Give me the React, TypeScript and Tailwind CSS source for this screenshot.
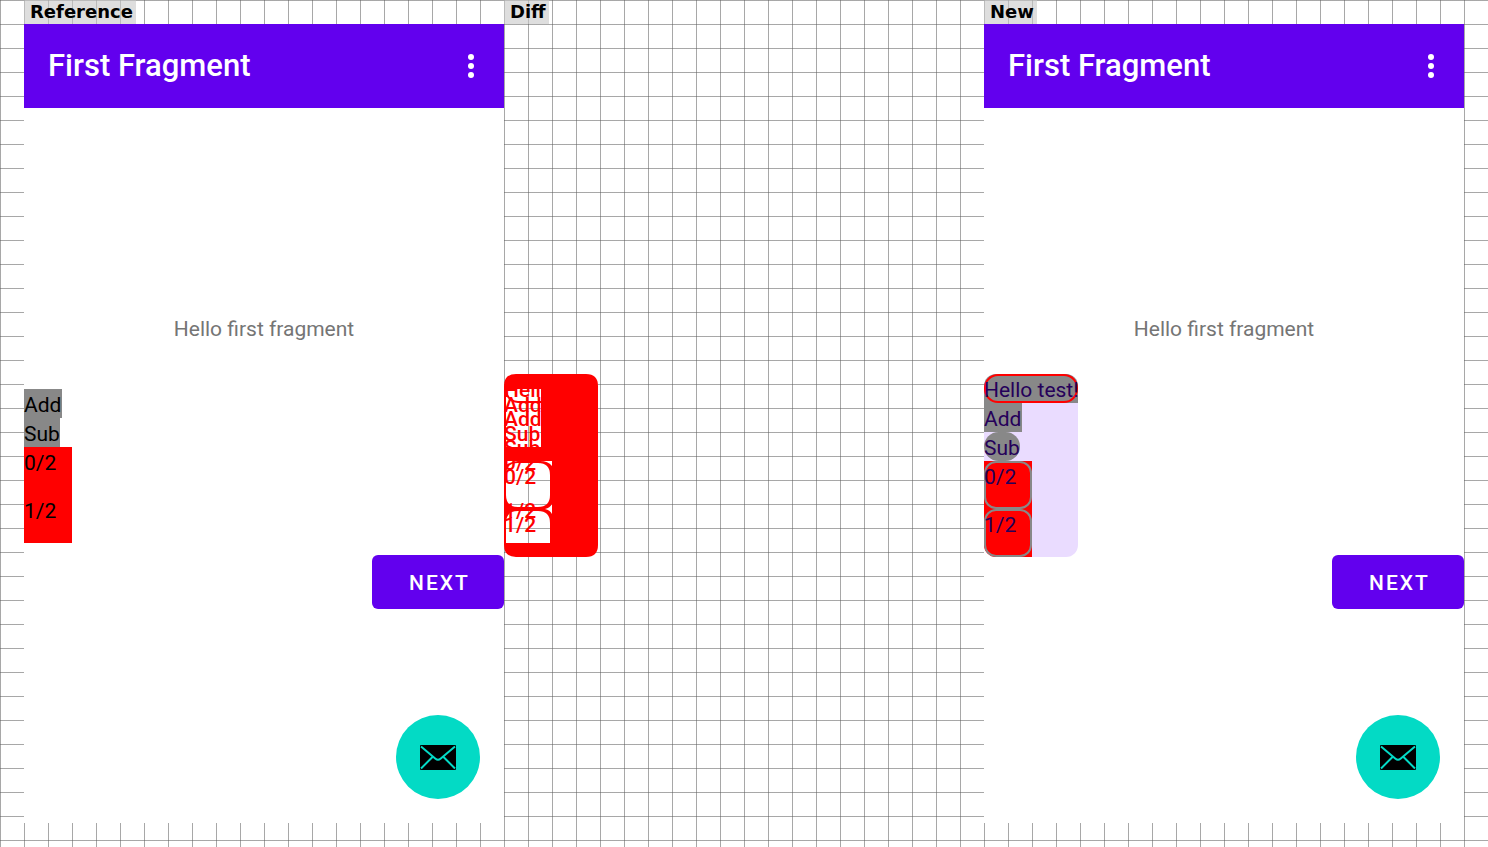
import type { ReactNode } from "react";

function Label({ children }: { children: ReactNode }) {
  return (
    <h2 className="h-6 w-fit bg-[#c8c8c8]/60 pr-[3px] pl-[6px] font-['DejaVu_Sans'] text-[18px]/[24px] font-bold text-black">
      {children}
    </h2>
  );
}

function MailIcon() {
  return (
    <svg viewBox="0 0 36 25" className="w-9" aria-hidden="true">
      <rect width="36" height="25" rx="1" fill="#000" />
      <path d="M1 1.5 15.5 13.7q2.5 2.2 5 0L35 1.5M1 23.5 12.5 12M35 23.5 23.5 12" fill="none" stroke="#03dac5" strokeWidth="2" />
    </svg>
  );
}

function Phone({ children }: { children: ReactNode }) {
  return (
    <div className="flex flex-col bg-white">
      <header className="flex h-[84px] items-center justify-between bg-[#6200ee] pr-6 pl-6 text-white">
        <h1 className="text-[31px]/[36px] font-medium">First Fragment</h1>
        <button type="button" aria-label="More options" className="flex w-[18px] justify-center">
          <svg viewBox="0 0 6 24" className="h-6" fill="currentColor" aria-hidden="true">
            <circle cx="3" cy="3" r="3" />
            <circle cx="3" cy="12" r="3" />
            <circle cx="3" cy="21" r="3" />
          </svg>
        </button>
      </header>
      <p className="mt-[207px] text-center text-[21px]/[29px] text-[#757575]">Hello first fragment</p>
      <div className="mt-[30px] flex h-[183px] flex-col text-[21px]/[25px]">{children}</div>
      <button
        type="button"
        className="mt-[-2px] h-[54px] w-[132px] self-end rounded-[6px] bg-[#6200ee] pt-[3px] pl-[3px] text-[21px] font-medium tracking-[2px] text-white"
      >
        NEXT
      </button>
      <button
        type="button"
        aria-label="Send mail"
        className="mt-[106px] mr-6 mb-6 flex size-[84px] items-center justify-center self-end rounded-full bg-[#03dac5]"
      >
        <MailIcon />
      </button>
    </div>
  );
}

function DiffView() {
  return (
    <div className="relative mt-[350px] h-[183px] w-[94px] text-[21px]/[25px] font-medium text-[#ff0000]">
      <svg viewBox="0 0 94 183" className="absolute inset-0 size-full" aria-hidden="true">
        <path
          fill="#f00"
          fillRule="evenodd"
          d="M12 0H82Q94 0 94 12V171Q94 183 82 183H12Q0 183 0 171V12Q0 0 12 0ZM2 15H37V73H2ZM2 87H48V92Q44 87 36 87H14Q8 87 2 91ZM14 89H34Q46 89 46 101V121Q46 133 34 133H14Q2 133 2 121V101Q2 89 14 89ZM14 137H34Q46 137 46 149V169H2V149Q2 137 14 137ZM48 130V140Q46 136 41 135Q46 134 48 130Z"
        />
        <path d="M2 18Q5 28 14 28H37" fill="none" stroke="#f00" strokeWidth="2" />
      </svg>
      <ul className="absolute top-0 left-0">
        <li className="pt-1">Hello</li>
        <li className="pt-1">Add</li>
        <li className="pt-1">Sub</li>
        <li className="h-12 pt-1">0/2</li>
        <li className="h-12 pt-1">1/2</li>
      </ul>
      <ul className="absolute top-[15px] left-0">
        <li className="pt-1">Add</li>
        <li className="pt-1">Sub</li>
        <li className="h-12 pt-1">0/2</li>
        <li className="h-12 pt-1">1/2</li>
      </ul>
    </div>
  );
}

export default function App() {
  return (
    <main className="grid min-h-screen grid-cols-3 content-start bg-white bg-[linear-gradient(to_right,rgba(96,96,96,0.55)_1px,transparent_1px),linear-gradient(to_bottom,rgba(96,96,96,0.55)_1px,transparent_1px)] bg-[size:24px_24px] px-6 font-[Roboto,sans-serif]">
      <section>
        <Label>Reference</Label>
        <Phone>
          <ul className="flex flex-col items-start pt-[15px] text-black">
            <li className="bg-[#888888] pt-1 pr-px">Add</li>
            <li className="bg-[#888888] pt-1">Sub</li>
            <li className="size-12 bg-[#ff0000] pt-1">0/2</li>
            <li className="size-12 bg-[#ff0000] pt-1">1/2</li>
          </ul>
        </Phone>
      </section>
      <section>
        <Label>Diff</Label>
        <DiffView />
      </section>
      <section>
        <Label>New</Label>
        <Phone>
          <ul className="flex w-[94px] flex-col items-start overflow-hidden rounded-[12px] bg-[#eadcff] text-[#25005a]">
            <li className="w-full bg-[#888888]">
              <div className="rounded-[14px] pt-1 whitespace-nowrap inset-ring-2 inset-ring-[#ff0000]">Hello test!</div>
            </li>
            <li className="bg-[#888888] pt-1 pr-px">Add</li>
            <li className="rounded-full bg-[#888888] pt-1">Sub</li>
            <li className="size-12 bg-[#ff0000]">
              <div className="h-12 rounded-[12px] pt-1 inset-ring-2 inset-ring-[#888888]">0/2</div>
            </li>
            <li className="size-12 bg-[#ff0000]">
              <div className="h-12 rounded-[12px] pt-1 inset-ring-2 inset-ring-[#888888]">1/2</div>
            </li>
          </ul>
        </Phone>
      </section>
    </main>
  );
}
